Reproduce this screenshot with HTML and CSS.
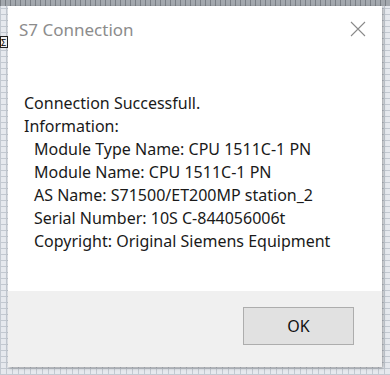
FILE: index.html
```html
<!DOCTYPE html>
<html lang="en">
<head>
    <meta charset="UTF-8">
    <title>S7 Connection</title>
    <link rel="stylesheet" href="styles.css">
</head>
<body>
    <div class="ruler"></div>
    <div class="sigma">&Sigma;</div>
    <div class="dialog">
        <div class="titlebar">
            <span class="title">S7 Connection</span>
            <svg class="close" width="16" height="16" viewBox="0 0 16 16">
                <path d="M1 1 L15 15 M15 1 L1 15" stroke="#8a8a8a" stroke-width="1.1" fill="none"/>
            </svg>
        </div>
        <div class="content">
            <p>Connection Successfull.</p>
            <p>Information:</p>
            <p class="indent">Module Type Name: CPU 1511C-1 PN</p>
            <p class="indent">Module Name: CPU 1511C-1 PN</p>
            <p class="indent">AS Name: S71500/ET200MP station_2</p>
            <p class="indent">Serial Number: 10S C-844056006t</p>
            <p class="indent">Copyright: Original Siemens Equipment</p>
        </div>
        <div class="footer">
            <button class="ok">OK</button>
        </div>
    </div>
</body>
</html>
```

FILE: styles.css
```css
body {
    margin: 0;
    width: 390px;
    height: 375px;
    overflow: hidden;
    position: relative;
    font-family: 'Noto Sans', 'Open Sans', sans-serif;
    background-color: #e6e9ee;
    background-image:
        repeating-linear-gradient(90deg, #c3c9d1 0 1px, transparent 1px 6px),
        repeating-linear-gradient(0deg, #c3c9d1 0 1px, transparent 1px 6px);
}
.ruler {
    position: absolute;
    left: 0;
    top: 0;
    width: 390px;
    height: 6px;
    background: repeating-linear-gradient(90deg, #7a7f85 0 1px, #a3a8ae 1px 5px);
}
.sigma {
    position: absolute;
    left: 0;
    top: 36px;
    width: 8px;
    height: 12px;
    border: 1px solid #222;
    background: #f2f2f2;
    font-size: 9px;
    line-height: 12px;
    overflow: hidden;
    box-sizing: border-box;
}
.dialog {
    position: absolute;
    left: 8px;
    top: 6px;
    width: 374px;
    height: 361px;
    background: #fff;
    box-shadow: 1px 1px 3px rgba(0, 0, 0, 0.35);
    display: flex;
    flex-direction: column;
}
.titlebar {
    height: 46px;
    display: flex;
    align-items: center;
    justify-content: space-between;
    padding: 0 16px 0 11px;
}
.title {
    font-size: 17px;
    color: #8c8c8c;
}
.content {
    flex: 1;
    padding: 40px 16px 0 16px;
    font-size: 16px;
    color: #1a1a1a;
}
.content p {
    margin: 0;
    line-height: 23px;
}
.content .indent {
    padding-left: 10px;
}
.footer {
    height: 76px;
    background: #f0f0f0;
    display: flex;
    justify-content: flex-end;
    align-items: flex-start;
    padding: 16px 28px 0 0;
    box-sizing: border-box;
}
.ok {
    width: 111px;
    height: 38px;
    background: #e1e1e1;
    border: 1px solid #adadad;
    font-family: inherit;
    font-size: 16px;
    color: #111;
}
```
